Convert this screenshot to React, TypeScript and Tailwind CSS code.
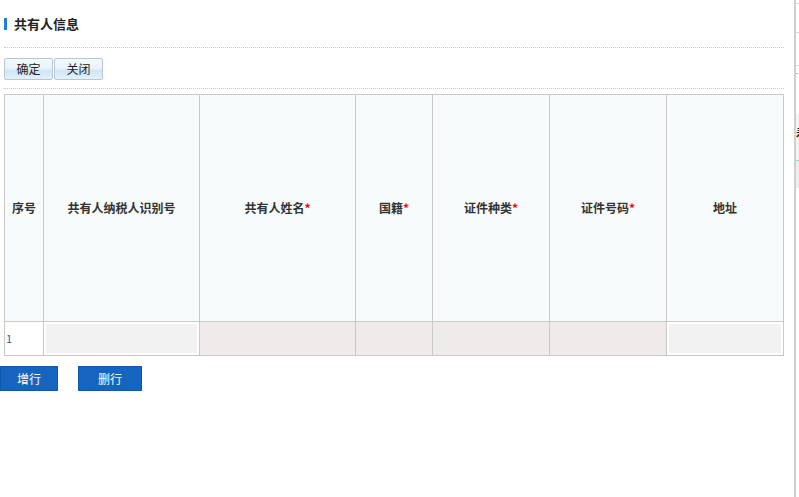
import React from 'react'

const font = { fontFamily: '"Noto Sans CJK SC", "Liberation Sans", sans-serif' }

const headers = [
  { label: '序号', width: 'w-[39px]', required: false },
  { label: '共有人纳税人识别号', width: 'w-[156px]', required: false },
  { label: '共有人姓名', width: 'w-[156px]', required: true },
  { label: '国籍', width: 'w-[77px]', required: true },
  { label: '证件种类', width: 'w-[117px]', required: true },
  { label: '证件号码', width: 'w-[117px]', required: true },
  { label: '地址', width: 'w-[117px]', required: false },
]

function ToolButton({ label }: { label: string }) {
  return (
    <button className="h-[22px] w-[49px] rounded-[2px] border border-[#b7c7d3] bg-[linear-gradient(#f4f9fd_0%,#eaf3fa_45%,#cfe5f6_60%,#e4f1fb_100%)] text-[12px] leading-none text-[#222]">
      {label}
    </button>
  )
}

export default function App() {
  return (
    <div className="flex h-[497px] w-[799px] overflow-hidden bg-white text-[#333]" style={font}>
      <div className="w-[794px] shrink-0">
        <div className="flex items-center pl-[4px] pt-[16px]">
          <span className="h-[12px] w-[3px] bg-[#1f7ee0]" />
          <span className="ml-[7px] text-[13px] font-bold leading-[16px] text-[#222]">共有人信息</span>
        </div>
        <div className="ml-[4px] mt-[15px] w-[780px] border-t border-dotted border-[#c8c8c8]" />

        <div className="ml-[4px] mt-[10px] flex gap-[1px]">
          <ToolButton label="确定" />
          <ToolButton label="关闭" />
        </div>
        <div className="ml-[4px] mt-[8px] w-[780px] border-t border-dotted border-[#c8c8c8]" />

        <table className="ml-[4px] mt-[5px] w-[780px] table-fixed border-collapse">
          <thead>
            <tr className="h-[227px] bg-[#f7fbfc]">
              {headers.map((h) => (
                <th
                  key={h.label}
                  className={`${h.width} border border-[#c9c9c9] p-0 text-[12px] font-bold text-[#333]`}
                >
                  {h.label}
                  {h.required && <span className="text-[#ff0000]">*</span>}
                </th>
              ))}
            </tr>
          </thead>
          <tbody>
            <tr className="h-[34px]">
              <td className="border border-[#c9c9c9] bg-white pl-[1px] text-[11px] text-[#1a5ea8]">1</td>
              <td className="border border-[#c9c9c9] bg-white p-[2px]">
                <div className="h-[29px] bg-[#f2f2f2]" />
              </td>
              <td className="border border-[#c9c9c9] bg-[#efebeb]" />
              <td className="border border-[#c9c9c9] bg-[#efebeb]" />
              <td className="border border-[#c9c9c9] bg-[#efebeb]" />
              <td className="border border-[#c9c9c9] bg-[#efebeb]" />
              <td className="border border-[#c9c9c9] bg-white p-[2px]">
                <div className="h-[29px] bg-[#f2f2f2]" />
              </td>
            </tr>
          </tbody>
        </table>

        <div className="mt-[10px] flex gap-[20px]">
          <button className="h-[25px] w-[58px] border border-[#0f59ad] bg-[#1565c0] text-[12px] text-white">增行</button>
          <button className="h-[25px] w-[64px] border border-[#0f59ad] bg-[#1565c0] text-[12px] text-white">删行</button>
        </div>
      </div>

      <div className="flex-1 border-l-2 border-[#cfcfcf]">
        <div className="mt-[3px] border-t border-[#dcdcdc]" />
        <div className="mt-[28px] border-t border-[#dcdcdc]" />
        <div className="mt-[32px] border-t border-[#dcdcdc]" />
        <div className="mt-[7px] border-t border-dotted border-[#bbb]" />
        <div className="mt-[40px] h-[46px] overflow-hidden bg-[#f3f3f3] pt-[14px] text-[12px] font-bold leading-none text-[#222]">
          看
        </div>
        <div className="h-[1px] bg-[#8ee0cf]" />
        <div className="h-[27px] bg-[#f0eded]" />
      </div>
    </div>
  )
}
